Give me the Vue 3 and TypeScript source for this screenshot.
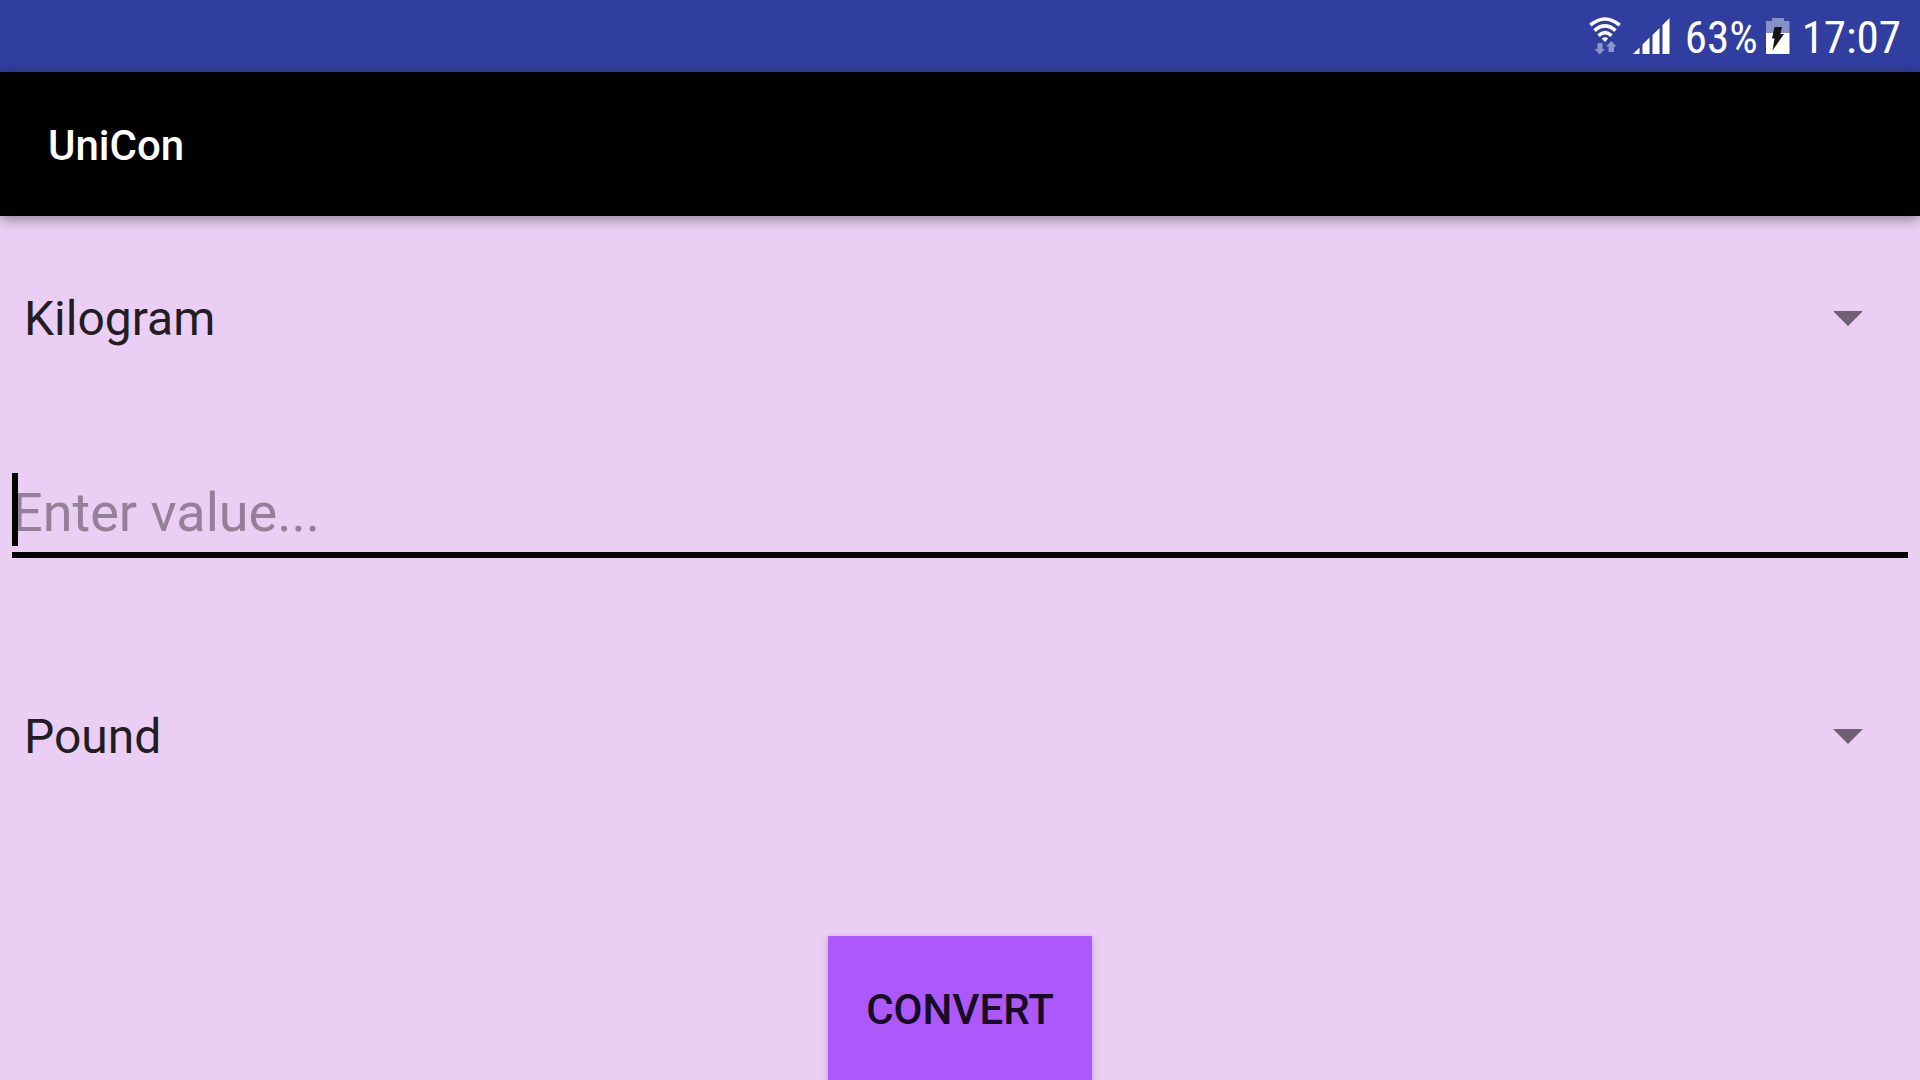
<script setup lang="ts">
import { ref } from 'vue'

const units: string[] = ['Kilogram', 'Pound', 'Gram', 'Ounce']
const from = ref('Kilogram')
const to = ref('Pound')
const amount = ref('')
const rates: Record<string, number> = { Kilogram: 1, Pound: 0.45359237, Gram: 0.001, Ounce: 0.028349523 }

function convert(): void {
  const value = Number(amount.value)
  if (amount.value !== '' && !Number.isNaN(value)) {
    amount.value = String((value * rates[from.value]) / rates[to.value])
  }
}
</script>

<template>
  <div class="screen">
    <div class="status">
      <svg class="wifi" width="32" height="38" viewBox="0 0 32 38" aria-hidden="true">
        <g fill="none" stroke="#fff" stroke-width="3.6">
          <path d="M1.300 8.200Q16-4.200 30.700 8.200" />
          <path d="M5.500 13.600Q16 4.200 26.500 13.600" />
          <path d="M9.500 18.600Q16 12.600 22.500 18.600" />
        </g>
        <path d="M12.800 21.600Q16 18.800 19.200 21.600L16 25Z" fill="#fff" />
        <path d="M8.500 26h5v6h2.500l-5.250 5.500L5.500 32h3zM19.500 35v-5.500H17l5.250-5.500 5.250 5.500H25V35z" fill="#8c94ca" />
      </svg>
      <svg class="signal" width="37" height="36" viewBox="0 0 37 36" aria-hidden="true">
        <path d="M0 36l6.500-6.500V36zM9.500 36V26.500l7-7V36zM19.500 36V17l7-7V36zM29.500 36V7l7-7V36z" fill="#fff" />
      </svg>
      <span class="percent">63%</span>
      <svg class="battery" width="24" height="36" viewBox="0 0 24 36" aria-hidden="true">
        <path d="M6 0h12v3h5.500v12H0V3h6z" fill="#8990c8" />
        <path d="M0 15h23.500v21H0z" fill="#fff" />
        <path d="M8.500 9h7.500l-1.500 7H18L6.500 32.500l2-12H6z" fill="#151515" />
      </svg>
      <span class="clock">17:07</span>
    </div>

    <header class="appbar">
      <h1>UniCon</h1>
    </header>

    <main>
      <div class="spinner">
        <select v-model="from" aria-label="Convert from">
          <option v-for="unit in units" :key="unit">{{ unit }}</option>
        </select>
        <svg width="30" height="15" viewBox="0 0 30 15" aria-hidden="true"><path d="M0 0h30L15 15z" /></svg>
      </div>

      <div class="field">
        <input v-model="amount" type="text" inputmode="decimal" placeholder="Enter value..." aria-label="Value" />
        <span class="caret"></span>
      </div>

      <div class="spinner">
        <select v-model="to" aria-label="Convert to">
          <option v-for="unit in units" :key="unit">{{ unit }}</option>
        </select>
        <svg width="30" height="15" viewBox="0 0 30 15" aria-hidden="true"><path d="M0 0h30L15 15z" /></svg>
      </div>

      <button type="button" @click="convert">CONVERT</button>
    </main>
  </div>
</template>

<style>
body {
  margin: 0;
  background: #ebcef3;
}
</style>

<style scoped>
.screen {
  min-height: 100vh;
  background: #ebcef3;
  font-family: Roboto, "Liberation Sans", sans-serif;
}

.status {
  display: flex;
  align-items: center;
  justify-content: flex-end;
  height: 72px;
  padding-right: 19px;
  background: #303f9f;
  color: #fff;
  font-family: "Roboto Condensed", Roboto, sans-serif;
  font-size: 45px;
  line-height: 56px;
}

.status svg {
  flex: none;
}

.status span {
  padding-top: 4px;
}

.signal {
  margin: 0 15px 0 12px;
}

.battery {
  margin: 0 12px 0 8px;
}

.appbar {
  position: relative;
  display: flex;
  align-items: center;
  box-sizing: border-box;
  height: 144px;
  padding: 4px 48px 0;
  background: #000;
  box-shadow: 0 3px 12px rgba(0, 0, 0, 0.4);
}

h1 {
  margin: 0;
  color: #fff;
  font-size: 42px;
  font-weight: 500;
  line-height: 56px;
}

main {
  display: flex;
  flex-direction: column;
  align-items: stretch;
  padding-top: 67px;
}

.spinner {
  position: relative;
  height: 72px;
}

.spinner select {
  appearance: none;
  display: block;
  width: 100%;
  height: 100%;
  margin: 0;
  padding: 0 96px 0 24px;
  border: 0;
  outline: 0;
  background: transparent;
  color: #211d22;
  font: 400 48px/72px Roboto, "Liberation Sans", sans-serif;
}

.spinner svg {
  position: absolute;
  top: 28px;
  right: 57px;
  fill: #6e6072;
  pointer-events: none;
}

.field {
  position: relative;
  margin: 118px 12px 143px;
}

.field input {
  display: block;
  box-sizing: border-box;
  width: 100%;
  height: 85px;
  padding: 0 0 1px;
  border: 0;
  border-bottom: 6px solid #000;
  outline: 0;
  background: transparent;
  color: #211d22;
  caret-color: transparent;
  font: 400 54px/78px Roboto, "Liberation Sans", sans-serif;
}

.field input::placeholder {
  color: #948199;
  opacity: 1;
}

.caret {
  position: absolute;
  top: 0;
  left: 0;
  width: 6px;
  height: 73px;
  background: #000;
  pointer-events: none;
}

button {
  align-self: center;
  width: 264px;
  height: 144px;
  margin-top: 163px;
  padding: 4px 0 0;
  border: 0;
  background: #ac58fc;
  box-shadow: 0 2px 6px rgba(0, 0, 0, 0.25);
  color: #170c20;
  font: 500 42px/56px Roboto, "Liberation Sans", sans-serif;
}
</style>
